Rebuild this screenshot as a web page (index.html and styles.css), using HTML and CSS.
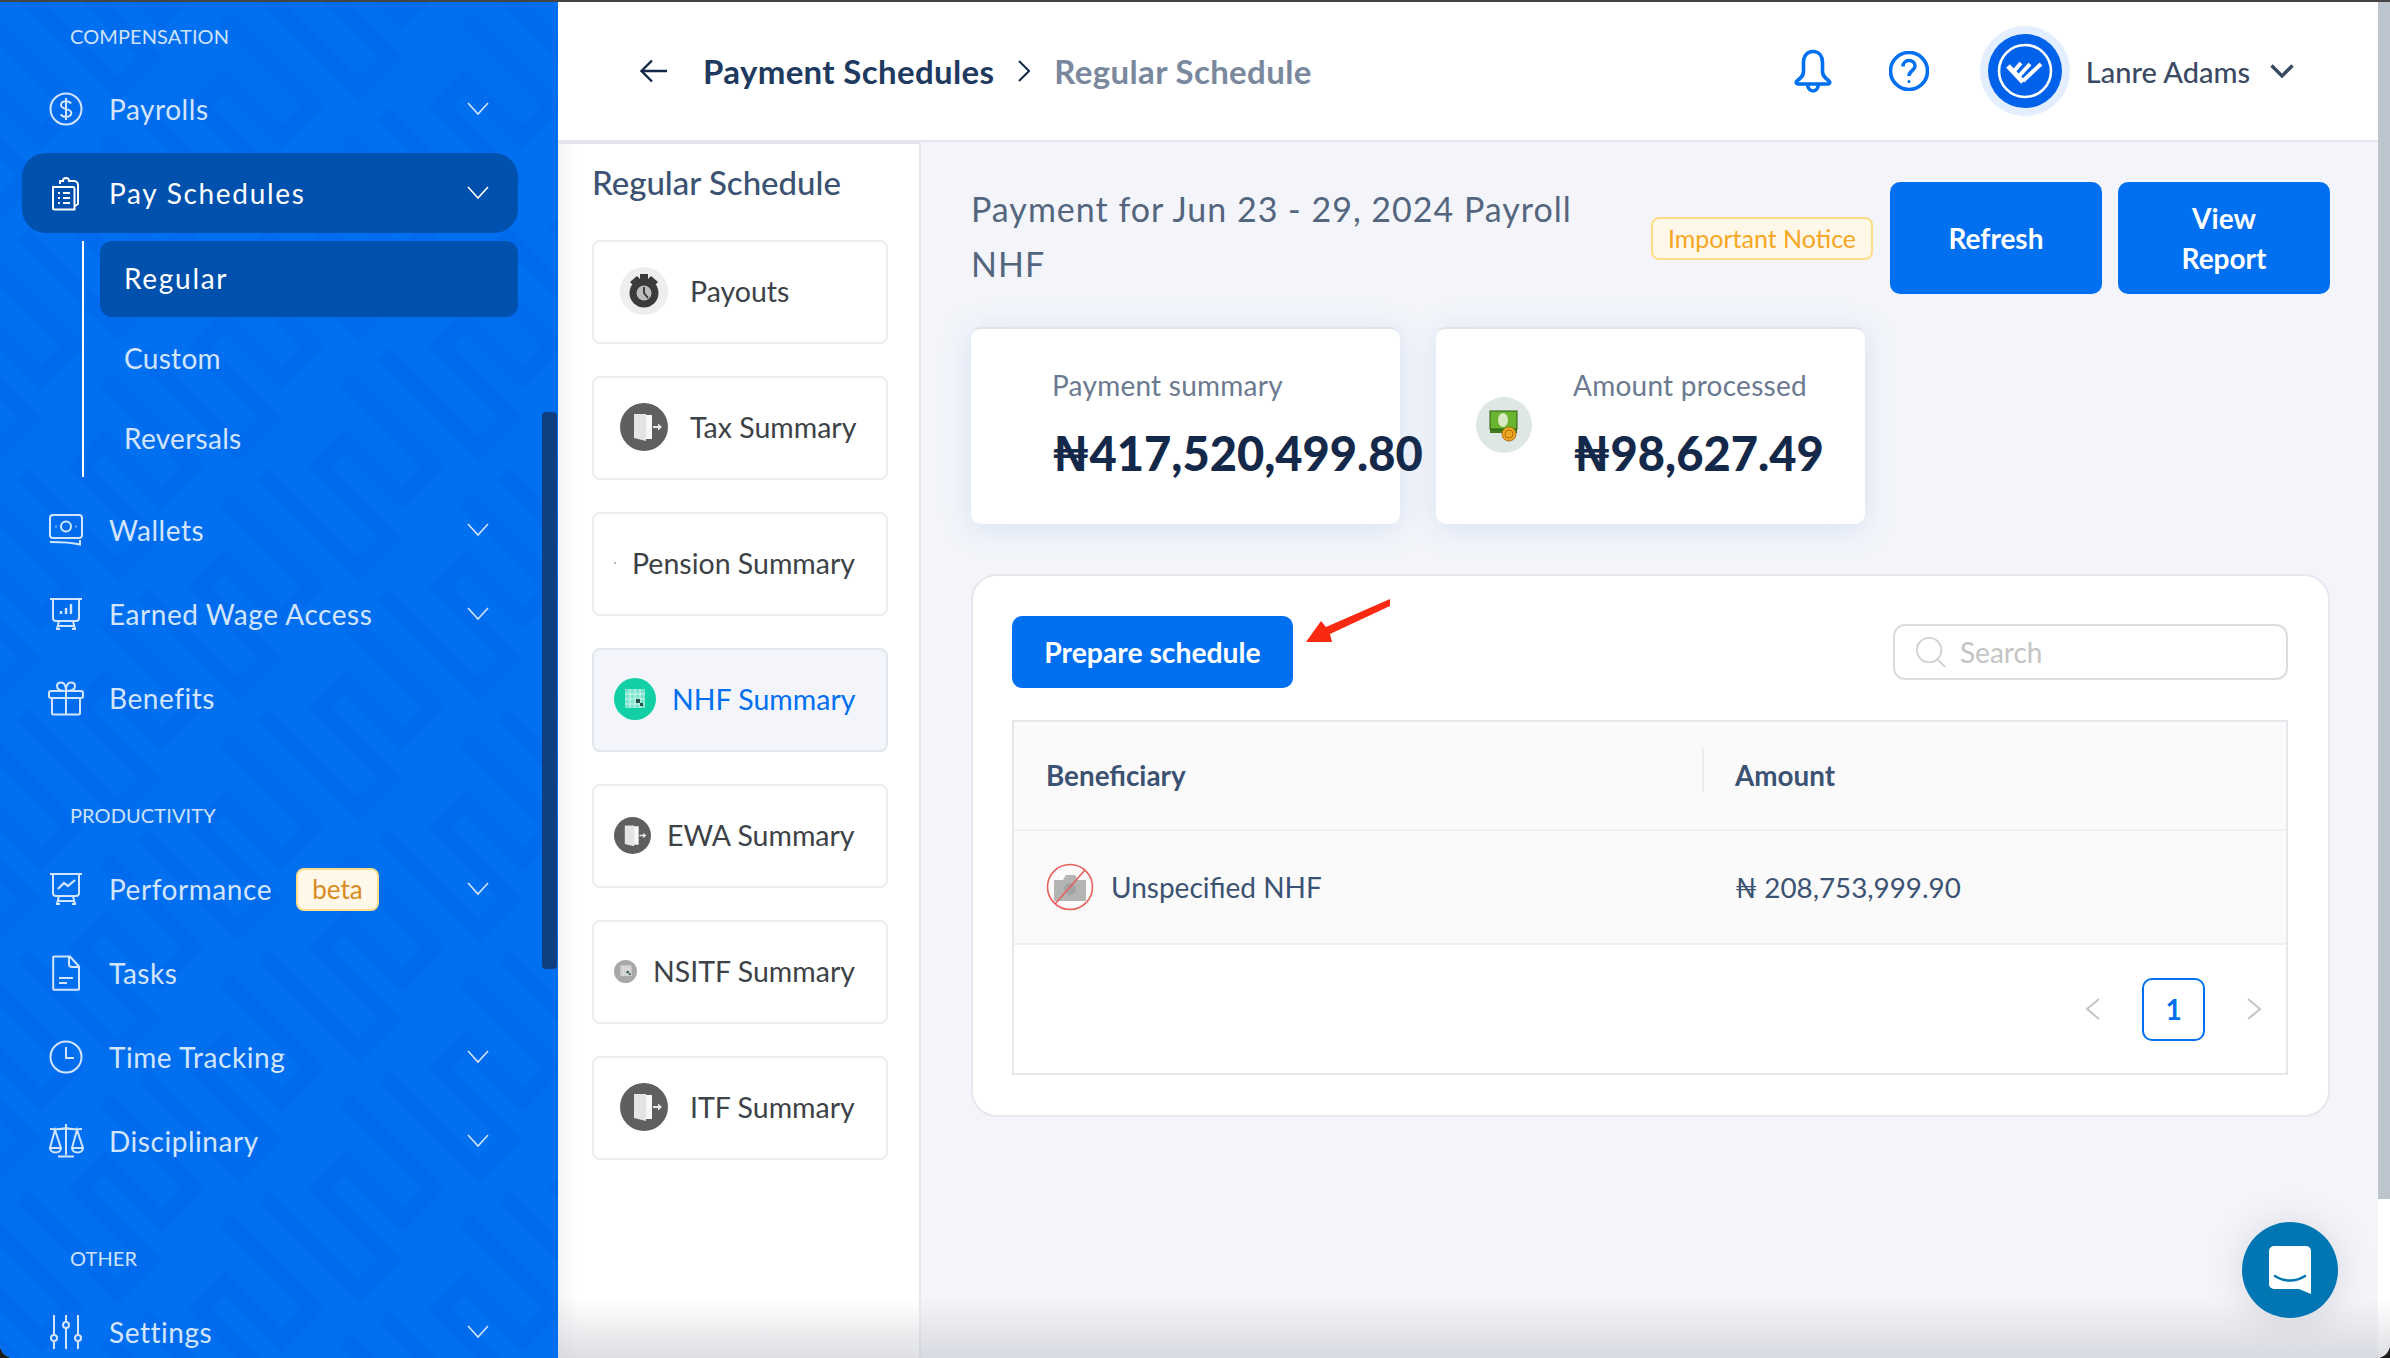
FILE: index.html
```html
<!DOCTYPE html>
<html lang="en">
<head>
  <meta charset="UTF-8" />
  <meta name="viewport" content="width=device-width, initial-scale=1.0" />
  <title>Regular Schedule</title>
  <link rel="stylesheet" href="styles.css">
</head>
<body>
  <svg class="sprites" width="0" height="0">
    <symbol id="chev" viewBox="0 0 22 14"><path d="M1 1l10 11L21 1" fill="none" stroke="currentColor" stroke-width="1.6"/></symbol>
    <symbol id="door" viewBox="0 0 48 48">
      <circle cx="24" cy="24" r="24" fill="#5f5f5f"/>
      <path d="M14 11h12v27l-12-3z" fill="#e4e4e4"/>
      <path d="M26 12h6v24h-6z" fill="#f7f7f7"/>
      <path d="M33 23h5v-2.500l4 3.500-4 3.500V25h-5z" fill="#e9e9e9"/>
    </symbol>
    <symbol id="grid" viewBox="0 0 42 40">
      <path d="M11 10h20v19H11z" fill="currentColor" opacity=".55"/>
      <path d="M11 15h20M11 20h20M11 25h20M16 10v19M21 10v19M26 10v19" stroke="#fff" stroke-width=".9" opacity=".7"/>
      <path d="M22 20h4v4h-4zM26 24h3v3h-3z" fill="#26514a"/>
    </symbol>
  </svg>

  <div class="window">
    <!-- Sidebar -->
    <aside class="sidebar">
      <svg class="sidebar-pattern" width="558" height="1356">
        <defs>
          <pattern id="keys" width="170" height="170" patternUnits="userSpaceOnUse" patternTransform="rotate(45)">
            <path d="M0 22h125v45H45v36h100v45H10" fill="none" stroke="#006ced" stroke-width="18"/>
          </pattern>
        </defs>
        <rect width="558" height="1356" fill="url(#keys)"/>
      </svg>
      <div class="thumb"></div>

      <nav class="nav">
        <div class="nav-label">COMPENSATION</div>
        <a class="nav-item">
          <svg class="nav-icon" viewBox="0 0 36 36"><circle cx="18" cy="18" r="15.500"/><path d="M23 12.500c-1-1.500-3-2.200-5-2.200-2.800 0-5 1.400-5 3.800 0 5.400 10.300 2.600 10.300 8 0 2.400-2.400 3.800-5.300 3.800-2.200 0-4.300-.9-5.300-2.500M18 7v22"/></svg>
          <span>Payrolls</span>
          <svg class="nav-chev"><use href="#chev"/></svg>
        </a>
        <a class="nav-item active">
          <svg class="nav-icon" viewBox="0 0 36 36"><path d="M5 12h20a1.500 1.500 0 0 1 1.500 1.500V34.500H6.500A1.500 1.500 0 0 1 5 33z"/><path d="M12 9V6h3a3 3 0 0 1 6 0h5a4 4 0 0 1 4 4v19l-3 2"/><path d="M10 18h2M15 18h7M10 23h2M15 23h7M10 28h2M15 28h7"/></svg>
          <span>Pay Schedules</span>
          <svg class="nav-chev"><use href="#chev"/></svg>
        </a>
        <div class="sub-nav">
          <a class="sub-item active">Regular</a>
          <a class="sub-item">Custom</a>
          <a class="sub-item">Reversals</a>
        </div>
        <a class="nav-item">
          <svg class="nav-icon" viewBox="0 0 36 36"><rect x="2" y="3" width="32" height="23" rx="3"/><circle cx="18" cy="14.500" r="5"/><path d="M7.500 14.500h1M27.500 14.500h1M2 30c10 0 20 0 30 2.500V28"/></svg>
          <span>Wallets</span>
          <svg class="nav-chev"><use href="#chev"/></svg>
        </a>
        <a class="nav-item">
          <svg class="nav-icon" viewBox="0 0 36 36"><path d="M2 3h32M5 3v19a3 3 0 0 0 3 3h20a3 3 0 0 0 3-3V3M11 25l-2 8M25 25l2 8M10 30h16M8 33h4M24 33h4"/><path d="M13 18v-3M18 18V12M23 18V8" stroke-width="2.400"/></svg>
          <span>Earned Wage Access</span>
          <svg class="nav-chev"><use href="#chev"/></svg>
        </a>
        <a class="nav-item">
          <svg class="nav-icon" viewBox="0 0 36 36"><rect x="1" y="11" width="34" height="7" rx="2"/><path d="M4 18v15a1.500 1.500 0 0 0 1.500 1.500h25A1.500 1.500 0 0 0 32 33V18M18 11v23.500M18 11c-3 0-9 0-9-5 0-2 1.500-3.500 4-3.500 3 0 5 3 5 8.500zM18 11c3 0 9 0 9-5 0-2-1.500-3.500-4-3.500-3 0-5 3-5 8.500z"/></svg>
          <span>Benefits</span>
        </a>

        <div class="nav-label label-gap">PRODUCTIVITY</div>
        <a class="nav-item">
          <svg class="nav-icon" viewBox="0 0 36 36"><path d="M2 3h32M5 3v19a3 3 0 0 0 3 3h20a3 3 0 0 0 3-3V3M11 25l-2 8M25 25l2 8M10 30h16M8 33h4M24 33h4"/><path d="M10 18l6-6 4 3 7-6" stroke-width="2.200"/></svg>
          <span>Performance</span>
          <span class="beta">beta</span>
          <svg class="nav-chev"><use href="#chev"/></svg>
        </a>
        <a class="nav-item">
          <svg class="nav-icon" viewBox="0 0 36 36"><path d="M6 1.500h16l9 10V34a.800.800 0 0 1-.800.800H6a.800.800 0 0 1-.800-.800V2.300a.800.800 0 0 1 .800-.800zM21 2v7a3 3 0 0 0 3 3h7M11 23h14M11 28h8"/></svg>
          <span>Tasks</span>
        </a>
        <a class="nav-item">
          <svg class="nav-icon" viewBox="0 0 36 36"><circle cx="18" cy="18" r="15.500"/><path d="M18 8v11h8"/></svg>
          <span>Time Tracking</span>
          <svg class="nav-chev"><use href="#chev"/></svg>
        </a>
        <a class="nav-item">
          <svg class="nav-icon" viewBox="0 0 36 36"><path d="M18 1v31M10 33.500h16M2 6c6 0 10 1 16-1 6 2 10 1 16 1M7 7L2 25h11zM29 7l-5 18h11zM2 25c.500 6 10.500 6 11 0M24 25c.500 6 10.500 6 11 0"/></svg>
          <span>Disciplinary</span>
          <svg class="nav-chev"><use href="#chev"/></svg>
        </a>

        <div class="nav-label label-gap">OTHER</div>
        <a class="nav-item">
          <svg class="nav-icon" viewBox="0 0 36 36"><path d="M6 1v20M6 27v8M18 1v7M18 14v21M30 1v20M30 27v8"/><circle cx="6" cy="24" r="3"/><circle cx="18" cy="11" r="3"/><circle cx="30" cy="24" r="3"/></svg>
          <span>Settings</span>
          <svg class="nav-chev"><use href="#chev"/></svg>
        </a>
      </nav>
    </aside>

    <!-- Right of the sidebar -->
    <div class="content">
      <header class="topbar">
        <svg class="back" viewBox="0 0 28 24"><path d="M27 12H2M12 1.500L1.500 12 12 22.500"/></svg>
        <span class="crumb">Payment Schedules</span>
        <svg class="crumb-sep" viewBox="0 0 12 22"><path d="M1 1l10 10L1 21"/></svg>
        <span class="crumb crumb-current">Regular Schedule</span>

        <div class="top-actions">
          <svg class="bell" viewBox="0 0 38 44"><path d="M19 2.500c-6 0-9.500 4.500-9.500 11v9c0 4-2 6-6.500 9.500-1.500 1.500-.5 3 1 3h30c1.500 0 2.500-1.500 1-3-4.500-3.500-6.500-5.500-6.500-9.500v-9c0-6.500-3.500-11-9.500-11zM13.500 35c0 4 2.500 7 5.500 7s5.500-3 5.500-7"/></svg>
          <svg class="help" viewBox="0 0 40 40"><circle cx="20" cy="20" r="18.500"/><path d="M14 15.500c0-3.500 2.700-6 6-6s6 2.300 6 5.500c0 4.500-6 5-6 10"/><circle cx="20" cy="30.500" r="1.500" fill="#006ff0" stroke="none"/></svg>
          <div class="avatar">
            <svg viewBox="0 0 74 74" width="74" height="74">
              <circle cx="37" cy="37" r="37" fill="#0062eb"/>
              <circle cx="37" cy="37" r="26" fill="none" stroke="#fff" stroke-width="2.600"/>
              <path d="M20 32l15 16" fill="none" stroke="#fff" stroke-width="5"/>
              <path d="M26 37l7-8M31 42l11-12M35 47l18-17" fill="none" stroke="#fff" stroke-width="4"/>
            </svg>
          </div>
          <span class="user">Lanre Adams</span>
          <svg class="user-chev" viewBox="0 0 24 14"><path d="M1.500 1.500L12 12 22.500 1.500"/></svg>
        </div>
      </header>

      <div class="body-row">
        <!-- Summary menu -->
        <section class="summary-menu">
          <h2>Regular Schedule</h2>
          <div class="summary-list">
            <a class="summary-card">
              <svg class="sum-icon big" viewBox="0 0 48 48">
                <circle cx="24" cy="24" r="24" fill="#eeeeee"/>
                <circle cx="24" cy="26" r="14.500" fill="#3b3b3b"/>
                <path d="M10 15l7-6 4 4-6 7zM38 15l-7-6-4 4 6 7zM20 7h8v6h-8z" fill="#3b3b3b"/>
                <circle cx="24" cy="26" r="7.500" fill="#bdbdbd"/>
                <path d="M24 20v6l4 5" stroke="#3b3b3b" stroke-width="2" fill="none"/>
              </svg>
              <span>Payouts</span>
            </a>
            <a class="summary-card">
              <svg class="sum-icon big"><use href="#door"/></svg>
              <span>Tax Summary</span>
            </a>
            <a class="summary-card">
              <span class="sum-dot"></span>
              <span>Pension Summary</span>
            </a>
            <a class="summary-card active">
              <span class="sum-disc teal"><svg width="42" height="40" class="sum-grid"><use href="#grid"/></svg></span>
              <span>NHF Summary</span>
            </a>
            <a class="summary-card">
              <svg class="sum-icon mid"><use href="#door"/></svg>
              <span>EWA Summary</span>
            </a>
            <a class="summary-card">
              <span class="sum-disc grey"><svg width="24" height="24" class="sum-grid"><use href="#grid"/></svg></span>
              <span>NSITF Summary</span>
            </a>
            <a class="summary-card">
              <svg class="sum-icon big"><use href="#door"/></svg>
              <span>ITF Summary</span>
            </a>
          </div>
        </section>

        <!-- Main -->
        <main class="main">
          <div class="head-row">
            <h1>Payment for Jun 23 - 29, 2024 Payroll<br>NHF</h1>
            <span class="notice">Important Notice</span>
            <button class="btn head-btn">Refresh</button>
            <button class="btn head-btn">View<br>Report</button>
          </div>

          <div class="stats">
            <div class="stat-card">
              <div class="stat-label">Payment summary</div>
              <div class="stat-value">₦417,520,499.80</div>
            </div>
            <div class="stat-card with-icon">
              <span class="money">
                <svg viewBox="0 0 56 56" width="56" height="56">
                  <rect x="14" y="14" width="27" height="22" fill="#3f7d1c"/>
                  <rect x="14" y="14" width="27" height="18" fill="#69b52f" stroke="#2e5f12"/>
                  <ellipse cx="27" cy="23" rx="5" ry="7" fill="#d9eac2"/>
                  <circle cx="33" cy="37" r="7" fill="#eda81f" stroke="#a9700f"/>
                  <circle cx="33" cy="37" r="4" fill="none" stroke="#a9700f"/>
                </svg>
              </span>
              <div>
                <div class="stat-label">Amount processed</div>
                <div class="stat-value">₦98,627.49</div>
              </div>
            </div>
          </div>

          <div class="panel">
            <div class="toolbar">
              <button class="btn prepare">Prepare schedule</button>
              <div class="search">
                <svg viewBox="0 0 34 34" width="32" height="32"><circle cx="15" cy="15" r="13"/><path d="M24 25l8 8"/></svg>
                <span>Search</span>
              </div>
            </div>

            <div class="table">
              <div class="tr th">
                <div class="td">Beneficiary</div>
                <div class="td amount-head">Amount</div>
              </div>
              <div class="tr">
                <div class="td who">
                  <svg viewBox="0 0 48 48" width="48" height="48">
                    <path d="M8 17h9l3-5h9l3 5h8v21H8z" fill="#b4b4b4"/>
                    <circle cx="24" cy="26" r="6" fill="#a3a3a3"/>
                    <circle cx="24" cy="24" r="22.500" fill="none" stroke="#e8605a" stroke-width="1.600"/>
                    <path d="M9 41L39 7" stroke="#e8605a" stroke-width="1.600"/>
                  </svg>
                  <span>Unspecified NHF</span>
                </div>
                <div class="td amount-cell">₦ 208,753,999.90</div>
              </div>
              <div class="pager">
                <svg class="pg-arrow" viewBox="0 0 15 22"><path d="M14 1L2 11l12 10"/></svg>
                <span class="pg-num">1</span>
                <svg class="pg-arrow" viewBox="0 0 15 22"><path d="M1 1l12 10L1 21"/></svg>
              </div>
            </div>

            <!-- Red annotation arrow -->
            <svg class="note-arrow" viewBox="0 0 86 44" width="86" height="44">
              <path d="M1 43L16 22l5 6L85 0v7L25 35l2 8z" fill="#fa2a12"/>
            </svg>
          </div>
        </main>
      </div>

      <div class="bottom-fade"></div>
      <button class="chat">
        <svg viewBox="0 0 42 48" width="42" height="48">
          <path d="M5 0h32a5 5 0 0 1 5 5v43l-12-5H5a5 5 0 0 1-5-5V5a5 5 0 0 1 5-5z" fill="#fff"/>
          <path d="M6 30c9 6 21 6 30 0" fill="none" stroke="#0176b3" stroke-width="2.600" stroke-linecap="round"/>
        </svg>
      </button>
    </div>

    <!-- Page scrollbar -->
    <div class="page-scroll"><div class="page-thumb"></div></div>
  </div>
</body>
</html>
```

FILE: styles.css
```css
* {
  box-sizing: border-box;
}

html, body {
  margin: 0;
  height: 100%;
  overflow: hidden;
}

body {
  font-family: Lato, "Noto Sans", "DejaVu Sans", sans-serif;
  background-color: #1c1c1c;
}

a {
  color: inherit;
  text-decoration: none;
}

.sprites {
  position: absolute;
}

.window {
  height: 1358px;
  border-top: 2px solid #444;
  border-radius: 0 0 14px 14px;
  overflow: hidden;
  display: flex;
  background-color: #fff;
}

/* Sidebar */
.sidebar {
  position: relative;
  width: 558px;
  flex: none;
  overflow: hidden;
  background-color: #006ff0;
  color: #d3e5fc;
}

.sidebar-pattern {
  position: absolute;
  top: 0;
  left: 0;
}

.thumb {
  position: absolute;
  top: 410px;
  right: 1px;
  width: 15px;
  height: 557px;
  border-radius: 4px;
  background-color: #0f3f80;
}

.nav {
  position: relative;
  padding-top: 14px;
}

.nav-label {
  height: 40px;
  margin-bottom: 13px;
  padding-left: 70px;
  font-size: 20px;
  line-height: 40px;
  letter-spacing: 0.1px;
  color: #cfe2fb;
}

.label-gap {
  margin-top: 57px;
  margin-bottom: 14px;
}

.nav-item {
  display: flex;
  align-items: center;
  height: 80px;
  margin: 0 40px 4px 22px;
  padding: 0 29px 0 26px;
  border-radius: 24px;
  font-size: 28px;
  letter-spacing: 0.55px;
}

.nav-item.active {
  background-color: #0050ad;
  color: #fff;
  letter-spacing: 1.7px;
}

.nav-icon {
  width: 36px;
  height: 36px;
  margin-right: 25px;
  flex: none;
  fill: none;
  stroke: currentColor;
  stroke-width: 2;
}

.nav-chev {
  width: 22px;
  height: 14px;
  margin-left: auto;
}

.beta {
  width: 83px;
  height: 43px;
  margin-left: 24px;
  border: 2px solid #ffdd88;
  border-radius: 8px;
  background-color: #fff8e8;
  color: #d98a20;
  font-size: 26px;
  line-height: 38px;
  text-align: center;
  letter-spacing: 0;
}

.sub-nav {
  display: flex;
  flex-direction: column;
  gap: 4px;
  margin: 8px 40px 13px 82px;
  padding-left: 16px;
  border-left: 2px solid #fff;
}

.sub-item {
  height: 76px;
  padding-left: 24px;
  border-radius: 12px;
  font-size: 28px;
  line-height: 74px;
  letter-spacing: 0.3px;
}

.sub-item.active {
  background-color: #0050ad;
  color: #fff;
  letter-spacing: 1.7px;
}

/* Content */
.content {
  position: relative;
  flex: 1;
  min-width: 0;
  display: flex;
  flex-direction: column;
}

.topbar {
  height: 140px;
  flex: none;
  display: flex;
  align-items: center;
  padding: 0 84px 0 82px;
  border-bottom: 2px solid #e4e6ec;
  background-color: #fff;
}

.back {
  width: 28px;
  height: 24px;
  margin-right: 35px;
  fill: none;
  stroke: #14294a;
  stroke-width: 2.4;
}

.crumb {
  font-size: 33px;
  font-weight: 700;
  letter-spacing: 0.35px;
  color: #1f3a5f;
}

.crumb-sep {
  width: 12px;
  height: 22px;
  margin: 0 24px;
  fill: none;
  stroke: #14294a;
  stroke-width: 2;
}

.crumb-current {
  color: #7a889e;
}

.top-actions {
  margin-left: auto;
  display: flex;
  align-items: center;
}

.bell {
  width: 38px;
  height: 44px;
  margin-right: 57px;
  fill: none;
  stroke: #006ff0;
  stroke-width: 3.6;
}

.help {
  width: 40px;
  height: 40px;
  margin-right: 51px;
  fill: none;
  stroke: #006ff0;
  stroke-width: 3.6;
}

.avatar {
  width: 90px;
  height: 90px;
  margin-right: 16px;
  display: flex;
  align-items: center;
  justify-content: center;
  border-radius: 50%;
  background-color: #e3eefe;
}

.avatar svg {
  display: block;
}

.user {
  font-size: 29px;
  font-weight: 500;
  color: #3b4a63;
}

.user-chev {
  width: 24px;
  height: 14px;
  margin-left: 20px;
  fill: none;
  stroke: #3b4a63;
  stroke-width: 3.4;
}

.body-row {
  flex: 1;
  min-height: 0;
  display: flex;
}

/* Summary menu */
.summary-menu {
  width: 363px;
  flex: none;
  padding: 0 31px 0 34px;
  border-top: 2px solid #e4e6ec;
  border-right: 2px solid #e7e9ee;
  background: linear-gradient(90deg, #f4f4f6, #fff 22px);
}

.summary-menu h2 {
  margin: 0;
  height: 96px;
  font-size: 33px;
  font-weight: 500;
  line-height: 76px;
  color: #3b5272;
}

.summary-list {
  display: flex;
  flex-direction: column;
  gap: 32px;
}

.summary-card {
  height: 104px;
  display: flex;
  align-items: center;
  gap: 16px;
  padding: 0 0 2px 20px;
  border: 2px solid #ecedf2;
  border-radius: 8px;
  background-color: #fff;
  font-size: 28.5px;
  color: #3d4247;
  white-space: nowrap;
}

.summary-card.active {
  background-color: #f3f5fa;
  border-color: #e2e4ee;
  color: #006ff0;
}

.sum-icon {
  flex: none;
}

.sum-icon.big {
  width: 48px;
  height: 48px;
  margin: 0 6px 0 6px;
}

.sum-icon.mid {
  width: 37px;
  height: 37px;
}

.sum-dot {
  width: 2px;
  height: 2px;
  background-color: #bbb;
}

.sum-disc {
  display: flex;
  align-items: center;
  justify-content: center;
  border-radius: 50%;
}

.sum-disc.teal {
  width: 42px;
  height: 42px;
  background-color: #12cfa6;
  color: #d8f5ec;
}

.sum-disc.grey {
  width: 23px;
  height: 23px;
  background-color: #a8a8a8;
  color: #e8e8e8;
}

.sum-grid {
  flex: none;
}

/* Main */
.main {
  flex: 1;
  min-width: 0;
  padding: 40px 48px 0 50px;
  background-color: #f3f5fa;
}

.head-row {
  display: flex;
  align-items: center;
  height: 112px;
}

.head-row h1 {
  flex: 1;
  margin: 0;
  padding-bottom: 5px;
  font-size: 34px;
  font-weight: 400;
  line-height: 55px;
  letter-spacing: 1px;
  color: #54657e;
}

.notice {
  width: 222px;
  height: 43px;
  margin-right: 17px;
  border: 2px solid #ffdd88;
  border-radius: 8px;
  background-color: #fff8e8;
  color: #f5a623;
  font-size: 25px;
  line-height: 38px;
  text-align: center;
}

.btn {
  border: none;
  border-radius: 10px;
  background-color: #006ff0;
  color: #fff;
  font-family: inherit;
  font-weight: 700;
}

.head-btn {
  width: 212px;
  height: 112px;
  font-size: 28px;
  line-height: 40px;
}

.head-btn + .head-btn {
  margin-left: 16px;
}

.stats {
  display: flex;
  gap: 36px;
  margin-top: 33px;
}

.stat-card {
  width: 429px;
  height: 197px;
  padding: 38px 0 0 81px;
  border-top: 2px solid #dfe3ea;
  border-radius: 10px;
  background-color: #fff;
  box-shadow: 0 4px 28px rgb(150 180 230 / 0.3);
}

.stat-card.with-icon {
  display: flex;
  align-items: flex-start;
  padding-left: 40px;
}

.money {
  width: 56px;
  height: 56px;
  margin: 30px 41px 0 0;
  flex: none;
  border-radius: 50%;
  background-color: #dfe7e5;
}

.stat-label {
  font-size: 28px;
  line-height: 36px;
  letter-spacing: 0.25px;
  color: #6b7a90;
}

.stat-value {
  margin-top: 20px;
  font-size: 47px;
  font-weight: 900;
  line-height: 60px;
  color: #14294a;
  white-space: nowrap;
}

.panel {
  position: relative;
  height: 543px;
  margin-top: 50px;
  padding: 40px 40px 0 39px;
  border: 2px solid #e6e8ee;
  border-radius: 26px;
  background-color: #fff;
}

.toolbar {
  display: flex;
  align-items: center;
  justify-content: space-between;
}

.prepare {
  width: 281px;
  height: 72px;
  font-size: 28.3px;
}

.search {
  width: 395px;
  height: 56px;
  display: flex;
  align-items: center;
  gap: 13px;
  padding-left: 20px;
  border: 2px solid #dcdcdc;
  border-radius: 12px;
  color: #c4c4c4;
  font-size: 28px;
}

.search svg {
  fill: none;
  stroke: #d2d2d2;
  stroke-width: 2;
}

.note-arrow {
  position: absolute;
  top: 23px;
  left: 332px;
}

.table {
  height: 355px;
  margin-top: 32px;
  border: 2px solid #e6e6ec;
}

.tr {
  display: grid;
  grid-template-columns: 688px 1fr;
  align-items: center;
  height: 114px;
  border-bottom: 2px solid #efeff2;
  background-color: #fafafb;
  font-size: 28px;
  color: #3b5272;
}

.th {
  height: 109px;
  font-weight: 700;
  font-size: 27.8px;
}

.td {
  padding-left: 32px;
}

.amount-head {
  position: relative;
  padding-left: 33px;
}

.amount-head::before {
  content: "";
  position: absolute;
  left: 0;
  top: -11px;
  width: 2px;
  height: 44px;
  background-color: #ececf0;
}

.who {
  display: flex;
  align-items: center;
  gap: 17px;
}

.amount-cell {
  padding-left: 33px;
  font-size: 27.8px;
}

.pager {
  height: 128px;
  display: flex;
  align-items: center;
  justify-content: flex-end;
  padding-right: 24px;
}

.pg-arrow {
  width: 15px;
  height: 22px;
  fill: none;
  stroke: #c4c4c4;
  stroke-width: 2;
}

.pg-num {
  width: 63px;
  height: 63px;
  margin: 0 42px;
  border: 2px solid #006ff0;
  border-radius: 10px;
  color: #006ff0;
  font-size: 28px;
  font-weight: 700;
  line-height: 59px;
  text-align: center;
}

/* Overlays */
.bottom-fade {
  position: absolute;
  left: 0;
  right: -12px;
  bottom: 0;
  height: 60px;
  background: linear-gradient(180deg, rgb(190 192 200 / 0), rgb(190 192 200 / 0.5));
  pointer-events: none;
}

.chat {
  position: absolute;
  top: 1220px;
  left: 1684px;
  width: 96px;
  height: 96px;
  display: flex;
  align-items: center;
  justify-content: center;
  padding: 0;
  border: none;
  border-radius: 50%;
  background-color: #0176b3;
  box-shadow: 0 2px 40px rgb(0 0 0 / 0.12);
}

/* Page scrollbar */
.page-scroll {
  width: 12px;
  flex: none;
  background-color: #fff;
}

.page-thumb {
  height: 1197px;
  background-color: #bcc4cd;
}
```
